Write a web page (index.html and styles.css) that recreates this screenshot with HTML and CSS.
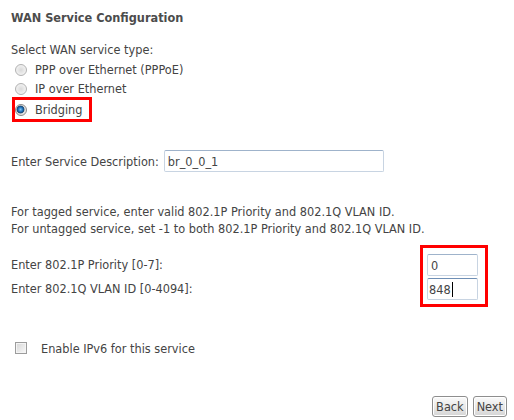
FILE: index.html
```html
<!DOCTYPE html>
<html lang="en">
<head>
<meta charset="UTF-8">
<title>WAN Service Configuration</title>
<link rel="stylesheet" href="styles.css">
</head>
<body>
<div class="page">
    <h3 class="title">WAN Service Configuration</h3>

    <div class="section">
        <div class="line">Select WAN service type:</div>
        <label class="choice"><input type="radio" name="svc"><span>PPP over Ethernet (PPPoE)</span></label>
        <label class="choice"><input type="radio" name="svc"><span>IP over Ethernet</span></label>
        <label class="choice marked"><input type="radio" name="svc" checked><span>Bridging</span></label>
    </div>

    <div class="desc-row">
        <span>Enter Service Description:</span>
        <input class="field wide" type="text" value="br_0_0_1">
    </div>

    <div class="note">
        For tagged service, enter valid 802.1P Priority and 802.1Q VLAN ID.<br>
        For untagged service, set -1 to both 802.1P Priority and 802.1Q VLAN ID.
    </div>

    <div class="vlan">
        <div class="vlan-labels">
            <div class="vlan-label">Enter 802.1P Priority [0-7]:</div>
            <div class="vlan-label">Enter 802.1Q VLAN ID [0-4094]:</div>
        </div>
        <div class="vlan-inputs">
            <input class="field small" type="text" value="0">
            <div class="field small typing">848<span class="caret"></span></div>
        </div>
    </div>

    <label class="ipv6"><input type="checkbox"><span>Enable IPv6 for this service</span></label>

    <div class="buttons">
        <button class="btn">Back</button>
        <button class="btn">Next</button>
    </div>
</div>
</body>
</html>
```

FILE: styles.css
```css
body {
    margin: 0;
    background-color: #ffffff;
    font-family: Tahoma, "DejaVu Sans Condensed", "DejaVu Sans", sans-serif;
    font-size: 12.6px;
    color: #444444;
}
.page {
    width: 514px;
    height: 420px;
    padding: 10px 0 0 11px;
    box-sizing: border-box;
    display: flex;
    flex-direction: column;
}
.title {
    margin: 0;
    font-size: 12.6px;
    line-height: 16px;
    font-weight: bold;
    color: #4c4c4c;
}
.section {
    margin-top: 16px;
    display: flex;
    flex-direction: column;
    align-items: flex-start;
}
.line {
    line-height: 16px;
    margin-bottom: 2px;
}
.choice {
    display: flex;
    align-items: center;
    height: 19px;
    padding-left: 4px;
}
.choice span {
    margin-left: 8px;
}
.choice.marked {
    margin-top: -1px;
    margin-left: 1px;
    padding: 0 6px 0 0;
    border: 3px solid #ff0000;
}
input[type="radio"] {
    appearance: none;
    margin: 0;
    width: 12px;
    height: 12px;
    border-radius: 50%;
    border: 1px solid #b2b2b2;
    box-sizing: border-box;
    background: radial-gradient(circle at 50% 50%, #d9d9d9 0, #e9e9e9 45%, #fafafa 100%);
}
input[type="radio"]:checked {
    border-color: #8a8a8a;
    background: radial-gradient(circle at 45% 45%, #7cc4f4 0, #1f6fb8 30%, #17456f 45%, #dcdcdc 55%, #f8f8f8 100%);
}
.desc-row {
    margin-top: 28px;
    display: flex;
    align-items: center;
    gap: 5px;
}
.field {
    font-family: Tahoma, "DejaVu Sans Condensed", "DejaVu Sans", sans-serif;
    font-size: 12.6px;
    color: #444444;
    box-sizing: border-box;
    height: 22px;
    margin: 0;
    padding: 1px 3px 0 3px;
    border: 1px solid #c8d4e2;
    border-top-color: #9fb3cb;
    border-radius: 2px;
    background-color: #ffffff;
    outline: none;
}
.wide {
    width: 220px;
}
.note {
    margin-top: 31px;
    line-height: 17px;
}
.vlan {
    margin-top: 8px;
    display: flex;
    justify-content: space-between;
    width: 477px;
}
.vlan-labels {
    padding-top: 9px;
    display: flex;
    flex-direction: column;
    gap: 2px;
}
.vlan-label {
    height: 22px;
    line-height: 22px;
}
.vlan-inputs {
    display: flex;
    flex-direction: column;
    gap: 2px;
    padding: 6px 7px 4px 4px;
    border: 3px solid #ff0000;
}
.small {
    width: 51px;
}
.typing {
    display: flex;
    align-items: center;
    padding-left: 1px;
    border-top-color: #6f8fb5;
}
.caret {
    width: 1px;
    height: 15px;
    margin-left: 1px;
    background-color: #000000;
}
.ipv6 {
    margin-top: 34px;
    display: flex;
    align-items: center;
    padding-left: 4px;
    height: 14px;
}
.ipv6 span {
    margin-left: 14px;
}
input[type="checkbox"] {
    appearance: none;
    margin: 0;
    width: 12px;
    height: 12px;
    box-sizing: border-box;
    border: 1px solid #9c9c9c;
    background: linear-gradient(135deg, #d6d6d6 0%, #eeeeee 70%, #fafafa 100%);
    box-shadow: inset 0 0 0 1px #f4f4f4;
}
.buttons {
    margin-top: auto;
    margin-bottom: 3px;
    align-self: flex-end;
    margin-right: 7px;
    display: flex;
    gap: 5px;
}
.btn {
    font-family: Tahoma, "DejaVu Sans Condensed", "DejaVu Sans", sans-serif;
    font-size: 12.6px;
    color: #444444;
    height: 21px;
    padding: 0 3px;
    border: 1px solid #8e8e8e;
    border-radius: 3px;
    background: linear-gradient(#fafafa, #e6e6e6 60%, #d4d4d4);
    box-shadow: inset 0 0 0 1px #ffffff;
}
```
